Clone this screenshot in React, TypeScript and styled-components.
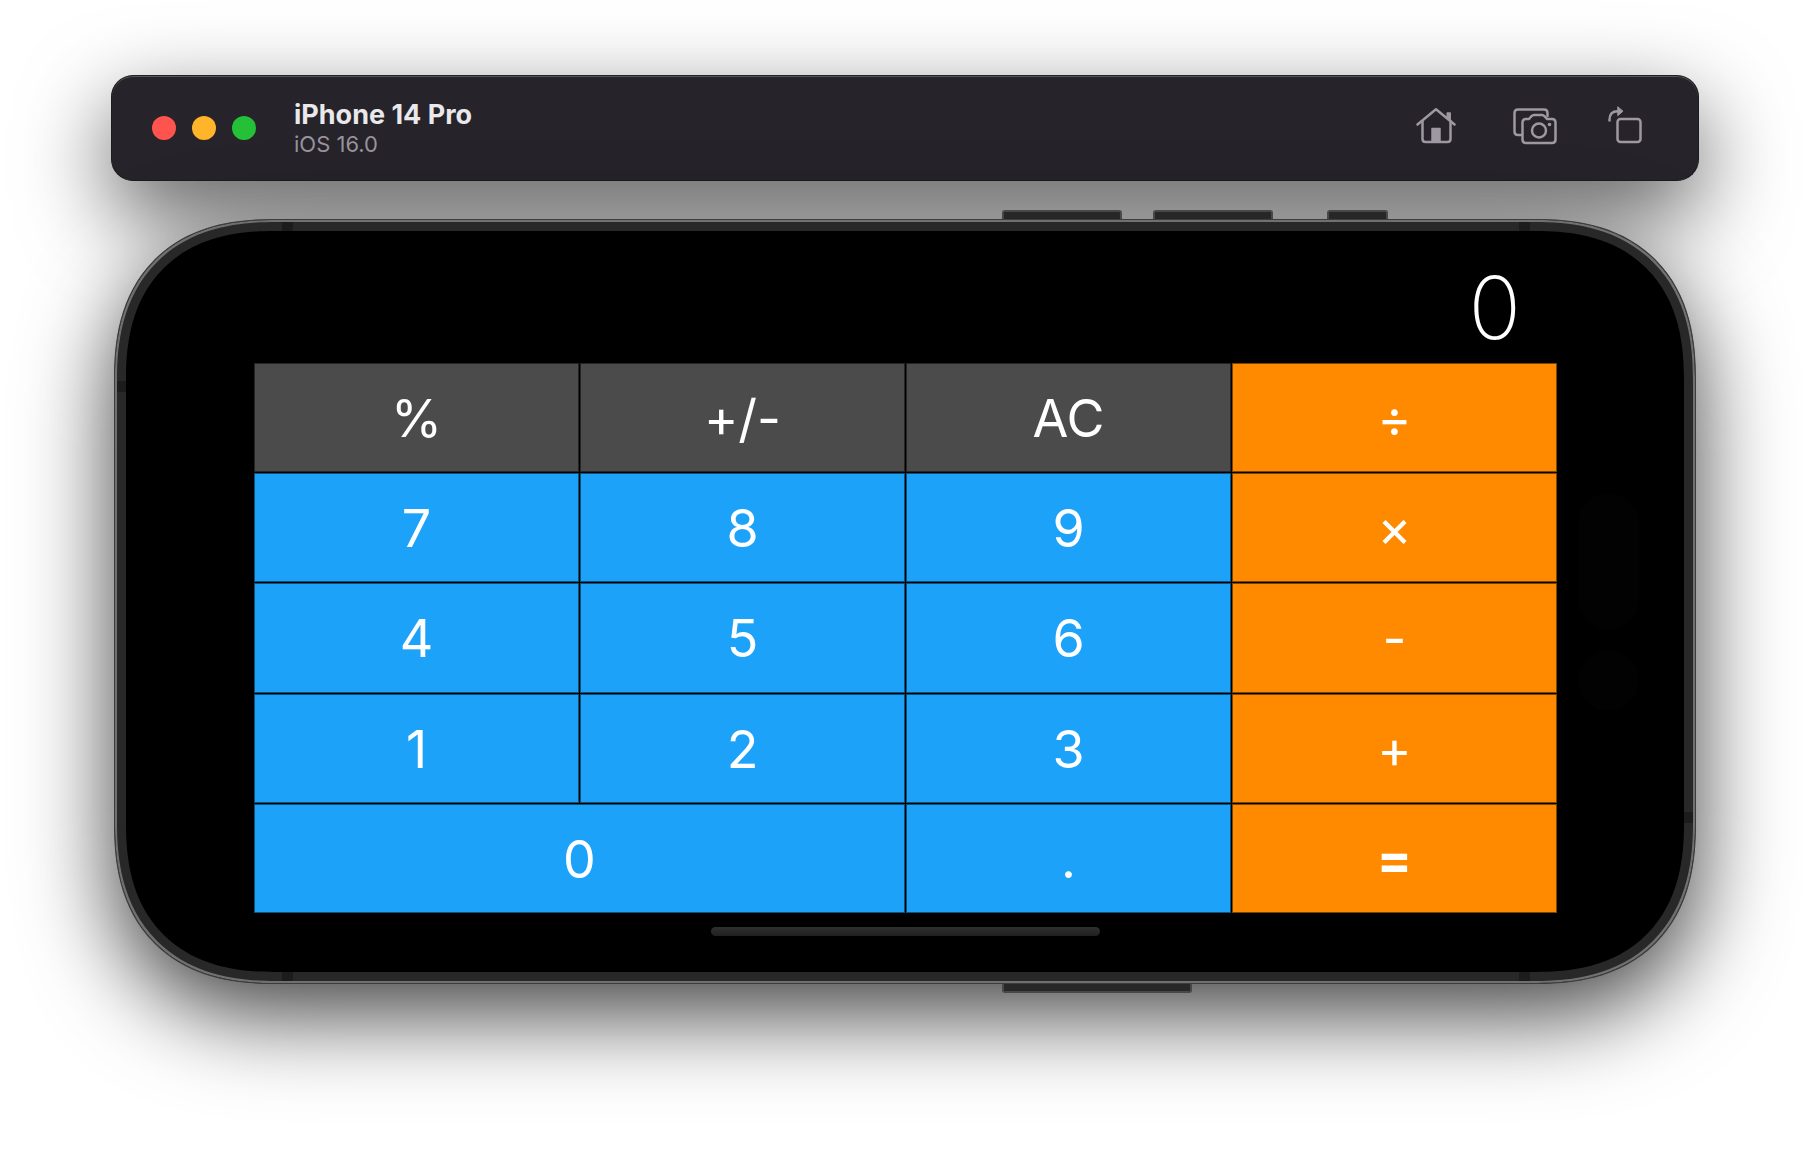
import React from "react";
import styled, { createGlobalStyle } from "styled-components";

const GlobalStyle = createGlobalStyle`
  *, *::before, *::after { box-sizing: border-box; }
  body {
    margin: 0;
    background: #fff;
    font-family: Inter, "Liberation Sans", sans-serif;
    -webkit-font-smoothing: antialiased;
  }
`;

const Page = styled.main`
  display: flex;
  flex-direction: column;
  gap: 29px;
  padding: 75px 111px 158px;
  overflow: hidden;
`;

const TitleBar = styled.header`
  display: flex;
  align-items: center;
  height: 106px;
  padding: 0 56px 0 40px;
  border: 1px solid #1b1b1f;
  border-top-color: #1c2422;
  border-radius: 22px;
  background: #26232a;
  box-shadow:
    inset 0 1px 0 #55555a,
    0 32px 88px rgba(0, 0, 0, 0.64);
`;

const Lights = styled.div`
  display: flex;
  gap: 16px;
`;

const Light = styled.button<{ $color: string }>`
  width: 24px;
  height: 24px;
  padding: 0;
  border: 0;
  border-radius: 50%;
  background: ${(p) => p.$color};
`;

const Titles = styled.div`
  flex: 1;
  margin-left: 38px;
  padding-top: 2px;
`;

const DeviceName = styled.h1`
  margin: 0;
  color: #e9e8ea;
  font-size: 27px;
  font-weight: 700;
  line-height: 30px;
`;

const SystemName = styled.p`
  margin: 0;
  color: #98939c;
  font-size: 22px;
  line-height: 28px;
`;

const Tools = styled.div`
  display: flex;
  align-items: center;
  gap: 50px;
  padding-bottom: 6px;
`;

const Tool = styled.button`
  display: flex;
  padding: 0;
  border: 0;
  background: none;
  color: #9d98a1;
`;

const Device = styled.section`
  margin: 0 3px;
`;

const SideKeys = styled.div`
  position: relative;
  z-index: 1;
  display: flex;
  padding-left: 888px;
`;

const SideKey = styled.span<{ $width: number; $space?: number; $bottom?: boolean }>`
  flex: none;
  width: ${(p) => p.$width}px;
  height: 9px;
  margin-right: ${(p) => p.$space ?? 0}px;
  border: 2px solid #484848;
  border-width: ${(p) => (p.$bottom ? "0 2px 2px" : "2px 2px 0")};
  border-radius: ${(p) => (p.$bottom ? "0 0 3px 3px" : "3px 3px 0 0")};
  background: #272727;
`;

const Frame = styled.div`
  position: relative;
  padding: 11px;
  border: 1px solid #3c3c3c;
  border-radius: 137px;
  background: #282828;
  box-shadow:
    inset 0 0 0 2px #707070,
    0 30px 90px rgba(0, 0, 0, 0.75);

  @supports (corner-shape: superellipse(1.25)) {
    border-radius: 160px;
    corner-shape: superellipse(1.25);
  }
`;

const Band = styled.i<{ $side: "top" | "bottom" | "left" | "right"; $at: string }>`
  position: absolute;
  background: #1c1c1c;
  ${(p) =>
    p.$side === "top" || p.$side === "bottom"
      ? `${p.$side}: 2px; width: 11px; height: 9px; ${p.$at};`
      : `${p.$side}: 2px; width: 9px; height: 11px; ${p.$at};`}
`;

const Screen = styled.div`
  position: relative;
  display: flex;
  flex-direction: column;
  padding: 0 127px 36px 128px;
  border-radius: 125px;
  background: #000;

  @supports (corner-shape: superellipse(1.25)) {
    border-radius: 148px;
    corner-shape: superellipse(1.25);
  }
`;

const Display = styled.output`
  height: 132px;
  padding: 22px 36px 0 0;
  color: #fff;
  font-size: 87px;
  font-weight: 200;
  line-height: 110px;
  text-align: right;
`;

const Keypad = styled.div`
  display: grid;
  grid-template-columns: repeat(4, 1fr);
  grid-auto-rows: 1fr;
  gap: 1px;
  height: 550px;
`;

type Kind = "digit" | "function" | "operator";

const fills: Record<Kind, string> = {
  digit: "#1ca2f9",
  function: "#4b4b4b",
  operator: "#ff8a00",
};

const Key = styled.button<{ $kind: Kind; $wide?: boolean; $bold?: boolean }>`
  grid-column: span ${(p) => (p.$wide ? 2 : 1)};
  padding: 3px 0 0;
  border: 0;
  background: ${(p) => fills[p.$kind]};
  box-shadow: inset 0 0 0 1px rgba(0, 0, 0, 0.5);
  color: #fff;
  font-family: inherit;
  font-size: 52px;
  font-weight: ${(p) => (p.$bold ? 700 : 400)};
  line-height: 60px;
`;

const HomeIndicator = styled.span`
  align-self: center;
  width: 389px;
  height: 9px;
  margin-top: 14px;
  border-radius: 5px;
  background: linear-gradient(#303030, #202020);
`;

const Sensor = styled.i<{ $top: number; $height: number }>`
  position: absolute;
  top: ${(p) => p.$top}px;
  right: 45px;
  width: 61px;
  height: ${(p) => p.$height}px;
  border-radius: 31px;
  background: #020202;
`;

const keys: { label: string; kind: Kind; wide?: boolean; bold?: boolean }[] = [
  { label: "%", kind: "function" },
  { label: "+/-", kind: "function" },
  { label: "AC", kind: "function" },
  { label: "÷", kind: "operator" },
  { label: "7", kind: "digit" },
  { label: "8", kind: "digit" },
  { label: "9", kind: "digit" },
  { label: "×", kind: "operator" },
  { label: "4", kind: "digit" },
  { label: "5", kind: "digit" },
  { label: "6", kind: "digit" },
  { label: "-", kind: "operator" },
  { label: "1", kind: "digit" },
  { label: "2", kind: "digit" },
  { label: "3", kind: "digit" },
  { label: "+", kind: "operator" },
  { label: "0", kind: "digit", wide: true },
  { label: ".", kind: "digit" },
  { label: "=", kind: "operator", bold: true },
];

const HomeIcon = () => (
  <svg width="40" height="40" viewBox="0 0 40 40" fill="none" stroke="currentColor" strokeWidth="2.5" strokeLinecap="round" strokeLinejoin="round">
    <path d="M1.5 19.5 20 4.2l18.500 15.300" />
    <path d="M6.500 16v18q0 3 3 3h22q3 0 3-3V16" />
    <path d="M31.200 12V8h3v7z" fill="currentColor" strokeWidth="1.500" />
    <path d="M16 37V23.500h8V37z" fill="currentColor" strokeWidth="1.500" />
  </svg>
);

const CameraIcon = () => (
  <svg width="52" height="40" viewBox="-8 0 52 40" fill="none" stroke="currentColor" strokeWidth="2.500" strokeLinecap="round" strokeLinejoin="round">
    <path d="M7 30H4q-3.500 0-3.500-3.500V8Q.5 4.500 4 4.500h26q3.500 0 3.500 3.500v3" />
    <path d="M12 14h3l2.500-2.800q1-1.200 2.500-1.200h8q1.500 0 2.500 1.200L33 14h5q3.500 0 3.500 3.500v17q0 3.500-3.500 3.500H12q-3.500 0-3.500-3.500v-17q0-3.500 3.500-3.500z" />
    <circle cx="25" cy="25.500" r="7" />
    <circle cx="35.500" cy="19.500" r="1.800" fill="currentColor" stroke="none" />
  </svg>
);

const RotateIcon = () => (
  <svg width="34" height="40" viewBox="0 0 34 40" fill="none" stroke="currentColor" strokeWidth="2.500" strokeLinecap="round" strokeLinejoin="round">
    <path d="M1.500 16.500v-1.800Q1.500 6.200 9.500 6.200h1" strokeLinecap="butt" />
    <path d="m10 2 5 4.200-5 4.200z" fill="currentColor" strokeWidth="1" />
    <rect x="9.500" y="14" width="23" height="23" rx="3" />
  </svg>
);

export default function App() {
  return (
    <>
      <GlobalStyle />
      <Page>
        <TitleBar>
          <Lights>
            <Light $color="#ff544d" aria-label="Close" />
            <Light $color="#ffb429" aria-label="Minimize" />
            <Light $color="#24c138" aria-label="Zoom" />
          </Lights>
          <Titles>
            <DeviceName>iPhone 14 Pro</DeviceName>
            <SystemName>iOS 16.0</SystemName>
          </Titles>
          <Tools>
            <Tool aria-label="Home"><HomeIcon /></Tool>
            <Tool aria-label="Screenshot"><CameraIcon /></Tool>
            <Tool aria-label="Rotate"><RotateIcon /></Tool>
          </Tools>
        </TitleBar>

        <Device>
          <SideKeys>
            <SideKey $width={120} $space={31} />
            <SideKey $width={120} $space={54} />
            <SideKey $width={61} />
          </SideKeys>
          <Frame>
            <Band $side="top" $at="left: 167px" />
            <Band $side="top" $at="right: 165px" />
            <Band $side="bottom" $at="left: 167px" />
            <Band $side="bottom" $at="right: 165px" />
            <Band $side="left" $at="top: 161px" />
            <Band $side="right" $at="bottom: 160px" />
            <Screen>
              <Display aria-label="Result">0</Display>
              <Keypad>
                {keys.map((k) => (
                  <Key key={k.label} $kind={k.kind} $wide={k.wide} $bold={k.bold}>
                    {k.label}
                  </Key>
                ))}
              </Keypad>
              <HomeIndicator />
              <Sensor $top={262} $height={137} />
              <Sensor $top={419} $height={61} />
            </Screen>
          </Frame>
          <SideKeys>
            <SideKey $width={190} $bottom />
          </SideKeys>
        </Device>
      </Page>
    </>
  );
}
